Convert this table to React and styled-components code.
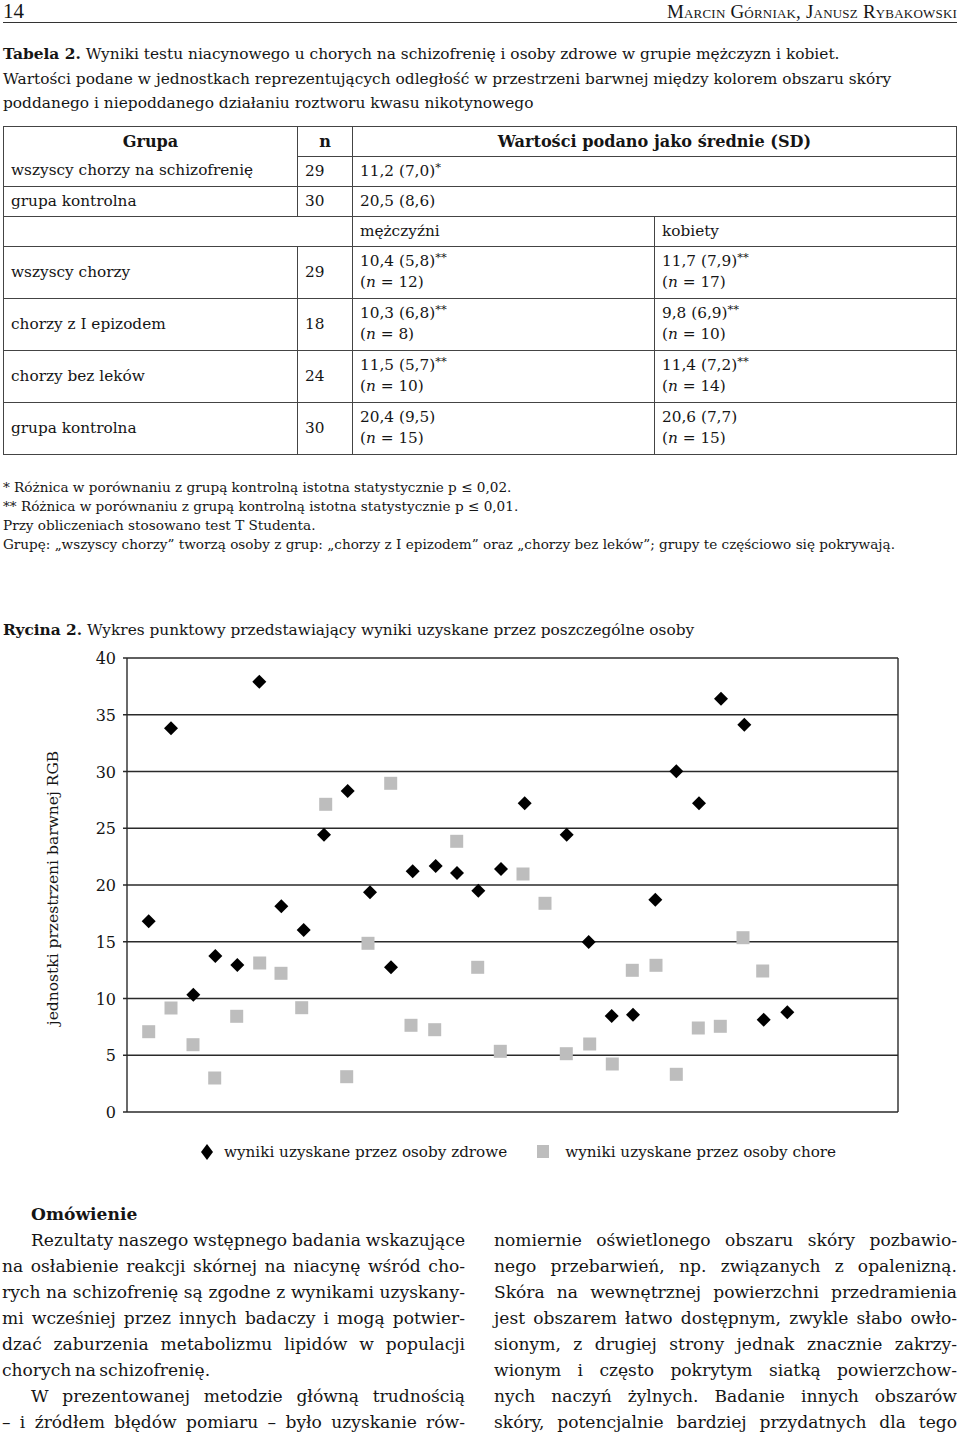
import React from "react";
import styled, { createGlobalStyle } from "styled-components";

const Global = createGlobalStyle`
  html, body { margin: 0; padding: 0; background: #fff; }
  body { font-family: "DejaVu Serif", "Liberation Serif", serif; color: #151515; }
`;

const Page = styled.div`
  width: 960px;
  padding: 0 3px;
  box-sizing: border-box;
`;

const RunningHead = styled.header`
  display: flex;
  justify-content: space-between;
  align-items: flex-end;
  height: 22px;
  border-bottom: 1.5px solid #333;
  font-family: "Liberation Serif", serif;
`;

const PageNo = styled.span`
  font-size: 21px;
  line-height: 21px;
`;

const Authors = styled.span`
  font-size: 19px;
  line-height: 21px;
  font-variant: small-caps;
  letter-spacing: 0.2px;
`;

const Caption = styled.div`
  margin-top: 19px;
  font-size: 15.4px;
  line-height: 24.5px;
`;

const CapLine = styled.div`
  white-space: nowrap;
`;

const Table = styled.table`
  margin-top: 10px;
  width: 953px;
  border-collapse: collapse;
  font-size: 15.3px;
  table-layout: fixed;
`;

const Td = styled.td`
  border: 1.5px solid #444;
  padding: 0 7px;
  height: ${(p) => (p.$tall ? 52 : 30)}px;
  box-sizing: border-box;
  vertical-align: middle;
  line-height: 21px;
  white-space: nowrap;
  font-weight: ${(p) => (p.$head ? 700 : 400)};
  font-size: ${(p) => (p.$head ? "16.1px" : "inherit")};
  text-align: ${(p) => (p.$center ? "center" : "left")};
  ${(p) => p.$noBottom && "border-bottom-style: hidden;"}
`;

const Sup = styled.sup`
  font-size: 11.5px;
  vertical-align: 5px;
  line-height: 0;
`;

const I = styled.i`
  font-style: italic;
`;

const Notes = styled.div`
  margin-top: 23px;
  font-size: 13.6px;
  line-height: 19px;
`;

const NoteLine = styled.div`
  white-space: nowrap;
`;

const FigCaption = styled.div`
  margin-top: 64px;
  font-size: 15.35px;
  line-height: 24px;
  white-space: nowrap;
`;

const Chart = styled.svg`
  display: block;
  margin-left: -3px;
  font-family: "DejaVu Serif", serif;
`;

const Legend = styled.div`
  margin-top: 19px;
  display: flex;
  align-items: center;
  height: 22px;
  padding-left: 197px;
  font-size: 15.2px;
  white-space: nowrap;
`;

const LegendItem = styled.div`
  display: flex;
  align-items: center;
  gap: 10px;
  margin-right: ${(p) => p.$gap || 0}px;
`;

const Columns = styled.div`
  margin-top: 38px;
  display: grid;
  grid-template-columns: 463px 463px;
  column-gap: 29px;
  margin-left: -1px;
  font-size: 17.1px;
  line-height: 26px;
  word-spacing: -2px;
`;

const Column = styled.div`
  padding-top: ${(p) => (p.$offset ? 26 : 0)}px;
`;

const Heading = styled.div`
  font-weight: 700;
  padding-left: 29px;
`;

const Line = styled.div`
  text-align: justify;
  text-align-last: ${(p) => (p.$last ? "left" : "justify")};
  padding-left: ${(p) => (p.$indent ? 29 : 0)}px;
`;

const OFF = 643;
const diamonds = [
  [148.7, 922.3], [171, 729.3], [193.3, 995.7], [215.3, 957], [237.3, 966], [259.3, 682.7],
  [281.3, 907.3], [303.7, 931], [324, 835.7], [347.7, 792], [370, 893.3], [391, 968.3],
  [412.7, 872.3], [435.7, 867], [457, 874], [478.3, 891.7], [501, 870], [524.7, 804.3],
  [566.7, 835.7], [588.7, 943], [611.7, 1017], [633, 1015.7], [655.3, 900.7], [676.3, 772.3],
  [699, 804.3], [721, 699.7], [744.3, 725.7], [763.7, 1020.7], [787.3, 1013.3],
];
const squares = [
  [148.7, 1032.7], [171, 1009], [193, 1045.7], [214.7, 1079], [236.7, 1017.3], [259.7, 964],
  [281, 974.3], [301.7, 1008.7], [325.7, 805.3], [346.7, 1077.7], [368, 944.3], [390.7, 784.3],
  [411, 1026.3], [434.7, 1030.7], [456.7, 842.3], [477.7, 968.3], [500.3, 1052.3], [523, 875],
  [545, 904.3], [566.3, 1054.7], [589.7, 1045], [612.3, 1065], [632.3, 971.3], [656, 966.3],
  [676.3, 1075.3], [698.3, 1029], [720.3, 1027.3], [743, 938.7], [762.7, 972],
];

const PLOT_L = 127;
const PLOT_R = 898;
const PLOT_T = 659 - OFF;
const STEP = 56.75;

function ScatterChart() {
  const ticks = [40, 35, 30, 25, 20, 15, 10, 5, 0];
  const bottom = PLOT_T + STEP * 8;
  return (
    <Chart width="960" height="480" viewBox="0 0 960 480">
      <text
        x="58"
        y={889 - OFF}
        transform={`rotate(-90 58 ${889 - OFF})`}
        textAnchor="middle"
        fontSize="15.5"
        fill="#151515"
      >
        jednostki przestrzeni barwnej RGB
      </text>
      {ticks.map((t, i) => {
        const y = PLOT_T + i * STEP;
        return (
          <g key={t}>
            <line x1={PLOT_L - 4} x2={PLOT_R} y1={y} y2={y} stroke="#2a2a2a" strokeWidth="1.4" />
            <text x="116" y={y + 6} textAnchor="end" fontSize="16" fill="#151515">
              {t}
            </text>
          </g>
        );
      })}
      <line x1={PLOT_L} x2={PLOT_L} y1={PLOT_T} y2={bottom} stroke="#2a2a2a" strokeWidth="1.4" />
      <line x1={PLOT_R} x2={PLOT_R} y1={PLOT_T} y2={bottom} stroke="#2a2a2a" strokeWidth="1.4" />
      {squares.map(([x, y], i) => (
        <rect key={"s" + i} x={x - 6.5} y={y - OFF - 6.5} width="13" height="13" fill="#bdbdbd" />
      ))}
      {diamonds.map(([x, y], i) => {
        const cy = y - OFF;
        return (
          <polygon
            key={"d" + i}
            points={`${x},${cy - 7} ${x + 7},${cy} ${x},${cy + 7} ${x - 7},${cy}`}
            fill="#000"
          />
        );
      })}
    </Chart>
  );
}

const Val = ({ v, stars, n }) => (
  <>
    {v}
    {stars && <Sup>{stars}</Sup>}
    <br />(<I>n</I> = {n})
  </>
);

export default function App() {
  return (
    <Page>
      <Global />
      <RunningHead>
        <PageNo>14</PageNo>
        <Authors>Marcin Górniak, Janusz Rybakowski</Authors>
      </RunningHead>

      <Caption>
        <CapLine>
          <b>Tabela 2.</b> Wyniki testu niacynowego u chorych na schizofrenię i osoby zdrowe w grupie mężczyzn i kobiet.
        </CapLine>
        <CapLine>
          Wartości podane w jednostkach reprezentujących odległość w przestrzeni barwnej między kolorem obszaru skóry
        </CapLine>
        <CapLine>poddanego i niepoddanego działaniu roztworu kwasu nikotynowego</CapLine>
      </Caption>

      <Table>
        <colgroup>
          <col style={{ width: 294 }} />
          <col style={{ width: 55 }} />
          <col style={{ width: 302 }} />
          <col style={{ width: 302 }} />
        </colgroup>
        <tbody>
          <tr>
            <Td $head $center $noBottom>Grupa</Td>
            <Td $head $center>n</Td>
            <Td $head $center colSpan={2}>Wartości podano jako średnie (SD)</Td>
          </tr>
          <tr>
            <Td>wszyscy chorzy na schizofrenię</Td>
            <Td>29</Td>
            <Td colSpan={2}>
              11,2 (7,0)<Sup>*</Sup>
            </Td>
          </tr>
          <tr>
            <Td>grupa kontrolna</Td>
            <Td>30</Td>
            <Td colSpan={2}>20,5 (8,6)</Td>
          </tr>
          <tr>
            <Td colSpan={2} />
            <Td>mężczyźni</Td>
            <Td>kobiety</Td>
          </tr>
          <tr>
            <Td $tall>wszyscy chorzy</Td>
            <Td $tall>29</Td>
            <Td $tall><Val v="10,4 (5,8)" stars="**" n="12" /></Td>
            <Td $tall><Val v="11,7 (7,9)" stars="**" n="17" /></Td>
          </tr>
          <tr>
            <Td $tall>chorzy z I epizodem</Td>
            <Td $tall>18</Td>
            <Td $tall><Val v="10,3 (6,8)" stars="**" n="8" /></Td>
            <Td $tall><Val v="9,8 (6,9)" stars="**" n="10" /></Td>
          </tr>
          <tr>
            <Td $tall>chorzy bez leków</Td>
            <Td $tall>24</Td>
            <Td $tall><Val v="11,5 (5,7)" stars="**" n="10" /></Td>
            <Td $tall><Val v="11,4 (7,2)" stars="**" n="14" /></Td>
          </tr>
          <tr>
            <Td $tall>grupa kontrolna</Td>
            <Td $tall>30</Td>
            <Td $tall><Val v="20,4 (9,5)" n="15" /></Td>
            <Td $tall><Val v="20,6 (7,7)" n="15" /></Td>
          </tr>
        </tbody>
      </Table>

      <Notes>
        <NoteLine>* Różnica w porównaniu z grupą kontrolną istotna statystycznie p ≤ 0,02.</NoteLine>
        <NoteLine>** Różnica w porównaniu z grupą kontrolną istotna statystycznie p ≤ 0,01.</NoteLine>
        <NoteLine>Przy obliczeniach stosowano test T Studenta.</NoteLine>
        <NoteLine>
          Grupę: „wszyscy chorzy” tworzą osoby z grup: „chorzy z I epizodem” oraz „chorzy bez leków”; grupy te częściowo się pokrywają.
        </NoteLine>
      </Notes>

      <FigCaption>
        <b>Rycina 2.</b> Wykres punktowy przedstawiający wyniki uzyskane przez poszczególne osoby
      </FigCaption>

      <ScatterChart />

      <Legend>
        <LegendItem $gap={30}>
          <svg width="14" height="16" viewBox="0 0 14 16">
            <polygon points="7,0 13,8 7,16 1,8" fill="#000" />
          </svg>
          <span>wyniki uzyskane przez osoby zdrowe</span>
        </LegendItem>
        <LegendItem>
          <svg width="12" height="13" viewBox="0 0 12 13">
            <rect x="0" y="0" width="12" height="13" fill="#bdbdbd" />
          </svg>
          <span style={{ marginLeft: 6 }}>wyniki uzyskane przez osoby chore</span>
        </LegendItem>
      </Legend>

      <Columns>
        <Column>
          <Heading>Omówienie</Heading>
          <Line $indent>Rezultaty naszego wstępnego badania wskazujące</Line>
          <Line>na osłabienie reakcji skórnej na niacynę wśród cho-</Line>
          <Line>rych na schizofrenię są zgodne z wynikami uzyskany-</Line>
          <Line>mi wcześniej przez innych badaczy i mogą potwier-</Line>
          <Line>dzać zaburzenia metabolizmu lipidów w populacji</Line>
          <Line $last>chorych na schizofrenię.</Line>
          <Line $indent>W prezentowanej metodzie główną trudnością</Line>
          <Line>– i źródłem błędów pomiaru – było uzyskanie rów-</Line>
        </Column>
        <Column $offset>
          <Line>nomiernie oświetlonego obszaru skóry pozbawio-</Line>
          <Line>nego przebarwień, np. związanych z opalenizną.</Line>
          <Line>Skóra na wewnętrznej powierzchni przedramienia</Line>
          <Line>jest obszarem łatwo dostępnym, zwykle słabo owło-</Line>
          <Line>sionym, z drugiej strony jednak znacznie zakrzy-</Line>
          <Line>wionym i często pokrytym siatką powierzchow-</Line>
          <Line>nych naczyń żylnych. Badanie innych obszarów</Line>
          <Line>skóry, potencjalnie bardziej przydatnych dla tego</Line>
        </Column>
      </Columns>
    </Page>
  );
}
